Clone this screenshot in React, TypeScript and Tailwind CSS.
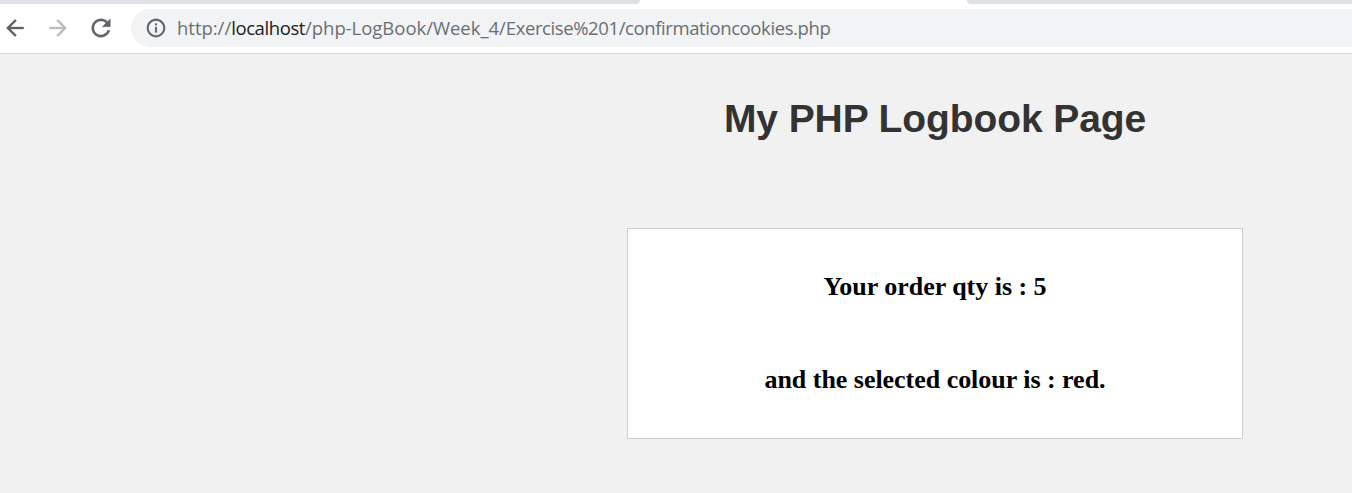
import React from "react";

function Icon({ d, className }: { d: string; className: string }) {
  return (
    <svg
      viewBox="0 0 24 24"
      fill="currentColor"
      stroke="currentColor"
      strokeWidth={0.25}
      className={`shrink-0 ${className}`}
    >
      <path d={d} />
    </svg>
  );
}

const BACK = "M20 11H7.83l5.59-5.59L12 4l-8 8 8 8 1.41-1.41L7.83 13H20v-2z";
const FORWARD = "M12 4l-1.41 1.41L16.17 11H4v2h12.17l-5.58 5.59L12 20l8-8z";
const RELOAD =
  "M17.65 6.35C16.2 4.9 14.21 4 12 4c-4.42 0-7.99 3.58-7.99 8s3.57 8 7.99 8c3.73 0 6.84-2.55 7.73-6h-2.08c-.82 2.33-3.04 4-5.65 4-3.31 0-6-2.69-6-6s2.69-6 6-6c1.66 0 3.14.69 4.22 1.78L13 11h7V4l-2.35 2.35z";
const INFO =
  "M11 7h2v2h-2zm0 4h2v6h-2zm1-9C6.48 2 2 6.48 2 12s4.48 10 10 10 10-4.48 10-10S17.52 2 12 2zm0 18c-4.41 0-8-3.59-8-8s3.59-8 8-8 8 3.59 8 8-3.59 8-8 8z";

function BrowserBar() {
  return (
    <header className="bg-white">
      <div className="flex h-1 justify-between">
        <div className="w-[640px] rounded-br-[8px] bg-[#dee1e6]" />
        <div className="w-[385px] rounded-bl-[8px] bg-[#dee1e6]" />
      </div>
      <div className="flex h-[50px] items-center border-b border-[#d6d8da] pb-px pl-[1.5px]">
        <Icon d={BACK} className="size-[26px] text-[#5f6368]" />
        <Icon d={FORWARD} className="ml-[17.5px] size-[26px] text-[#babcbe]" />
        <Icon d={RELOAD} className="ml-4 size-[28px] text-[#5f6368]" />
        <div className="ml-4 flex h-[38px] flex-1 items-center rounded-l-full bg-[#f1f3f4] pl-[13.5px]">
          <Icon d={INFO} className="size-[22px] text-[#5f6368]" />
          <span className="ml-[10.5px] font-['Open_Sans',sans-serif] text-[18.5px] leading-none whitespace-nowrap text-[#6b6f73]">
            <span className="tracking-[-0.02px]">http://</span>
            <span className="tracking-[-0.4px] text-[#202124]">localhost</span>
            <span className="tracking-[-0.03px]">/php-LogBook/Week_4/</span>
            <span className="tracking-[-0.4px]">Exercise%201/confirmationcookies.php</span>
          </span>
        </div>
      </div>
    </header>
  );
}

export default function App() {
  return (
    <div className="flex h-[493px] w-full flex-col overflow-hidden bg-[#f1f1f1]">
      <BrowserBar />
      <main className="flex flex-col items-center pl-[518px]">
        <h1 className="mt-[42px] font-['Liberation_Sans',Arial,sans-serif] text-[39px] leading-[46px] font-bold tracking-[-0.1px] whitespace-nowrap text-[#333333]">
          My PHP Logbook Page
        </h1>
        <section className="mt-[86px] flex h-[211px] w-[616px] flex-col items-center border border-[#cccccc] bg-white pt-[43px] font-['Liberation_Serif','Times_New_Roman',serif] text-[26px] leading-[30px] font-bold tracking-[-0.03px] text-black">
          <p>Your order qty is : 5</p>
          <p className="mt-[63px]">and the selected colour is : red.</p>
        </section>
      </main>
    </div>
  );
}
